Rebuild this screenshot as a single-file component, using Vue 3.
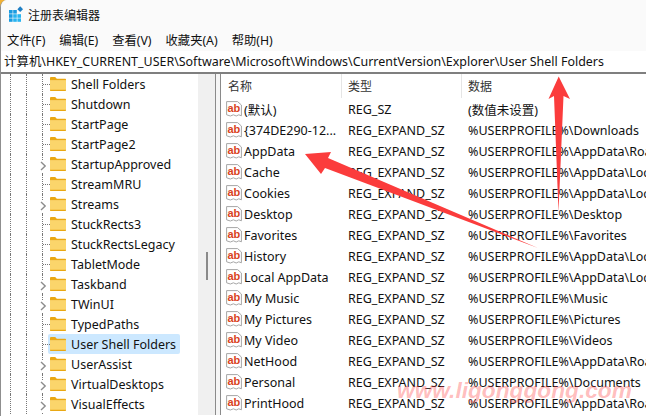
<script setup>
const tree = [
  ['Shell Folders', false], ['Shutdown', false], ['StartPage', false], ['StartPage2', false],
  ['StartupApproved', true], ['StreamMRU', false], ['Streams', true], ['StuckRects3', false],
  ['StuckRectsLegacy', false], ['TabletMode', false], ['Taskband', true], ['TWinUI', true],
  ['TypedPaths', false], ['User Shell Folders', false], ['UserAssist', true],
  ['VirtualDesktops', true], ['VisualEffects', true],
]
const E = 'REG_EXPAND_SZ'
const U = '%USERPROFILE%\\'
const rows = [
  ['(默认)', 'REG_SZ', '(数值未设置)'],
  ['{374DE290-12...', E, U + 'Downloads'],
  ['AppData', E, U + 'AppData\\Roaming'],
  ['Cache', E, U + 'AppData\\Local'],
  ['Cookies', E, U + 'AppData\\Local'],
  ['Desktop', E, U + 'Desktop'],
  ['Favorites', E, U + 'Favorites'],
  ['History', E, U + 'AppData\\Local'],
  ['Local AppData', E, U + 'AppData\\Local'],
  ['My Music', E, U + 'Music'],
  ['My Pictures', E, U + 'Pictures'],
  ['My Video', E, U + 'Videos'],
  ['NetHood', E, U + 'AppData\\Roaming'],
  ['Personal', E, U + 'Documents'],
  ['PrintHood', E, U + 'AppData\\Roaming'],
]
const menus = ['文件(F)', '编辑(E)', '查看(V)', '收藏夹(A)', '帮助(H)']
</script>

<template>
  <div class="window">
    <header class="title">
      <svg class="logo" width="16" height="16" viewBox="0 0 16 16">
        <g fill="#1a9be0">
          <rect x="1" y="4" width="3.6" height="3.6" /><rect x="5.2" y="4" width="3.6" height="3.6" />
          <rect x="1" y="8.2" width="3.6" height="3.6" /><rect x="5.2" y="8.2" width="3.6" height="3.6" fill="#27b4f0" />
          <rect x="9.4" y="8.2" width="3.6" height="3.6" fill="#27b4f0" />
          <rect x="1" y="12.4" width="3.6" height="3.4" /><rect x="5.2" y="12.4" width="3.6" height="3.4" fill="#27b4f0" />
          <rect x="9.4" y="12.4" width="3.6" height="3.4" fill="#27b4f0" />
        </g>
        <rect x="10.2" y="1.2" width="4" height="4" transform="rotate(45 12.2 3.2)" fill="#1f7fc4" />
      </svg>
      <span>注册表编辑器</span>
    </header>
    <nav class="menu">
      <span v-for="m in menus" :key="m">{{ m }}</span>
    </nav>
    <div class="address">计算机\HKEY_CURRENT_USER\Software\Microsoft\Windows\CurrentVersion\Explorer\User Shell Folders</div>

    <main class="panes">
      <section class="tree">
        <div class="tree-list">
          <div v-for="([name, more], i) in tree" :key="name" class="node">
            <i class="guide g1"></i><i class="guide g2"></i><i class="guide g3"></i>
            <svg v-if="more" class="chev" width="7" height="10" viewBox="0 0 7 10">
              <path d="M1 1l4.2 4L1 9" fill="none" stroke="#8c8c8c" stroke-width="1.4" />
            </svg>
            <i v-else class="dash"></i>
            <div class="item" :class="{ sel: name === 'User Shell Folders' }">
              <svg width="16" height="14" viewBox="0 0 16 14">
                <path d="M0 1.2C0 .5.5 0 1.2 0h4l1.6 1.8H15c.6 0 1 .4 1 1v1H0z" fill="#e9a814" />
                <path d="M0 3.2h16v9.6c0 .7-.5 1.2-1.2 1.2H1.2C.5 14 0 13.500 0 12.800z" fill="#fbd56b" />
                <path d="M0 12.700h16v.3c0 .6-.5 1-1.200 1H1.200C.5 14 0 13.600 0 13z" fill="#e9a814" />
              </svg>
              <span>{{ name }}</span>
            </div>
          </div>
        </div>
        <div class="scroll"><i class="thumb"></i></div>
      </section>

      <div class="split"></div>

      <section class="list">
        <div class="head">
          <div class="c1 hc">名称</div>
          <div class="c2 hc">类型</div>
          <div class="c3 hc">数据</div>
        </div>
        <div v-for="r in rows" :key="r[0]" class="row">
          <div class="c1 name">
            <svg class="ab" width="16" height="17" viewBox="0 0 16 17">
              <path d="M.6.6h11l3.800 3.400v10.800l-2.600-1-2.600 1.200-2.800-1.200-3 1.200-3.800-1.200z" fill="#fff" stroke="#a6a6a6" stroke-width="1" />
              <text x="1.400" y="10.800" class="abt">ab</text>
            </svg>
            <span>{{ r[0] }}</span>
          </div>
          <div class="c2">{{ r[1] }}</div>
          <div class="c3">{{ r[2] }}</div>
        </div>
      </section>
    </main>

    <svg class="arrows" width="646" height="416" viewBox="0 0 646 416">
      <polygon points="558.700,76.500 570,99 563.500,96 558.500,212 554,96 548.500,99" fill="#fb3c3c" />
      <polygon points="305,154 331,152 328,158 538,248 325,168 321,174" fill="#fb3c3c" />
    </svg>
    <div class="mark">www.ligonggong.com</div>
  </div>
</template>

<style scoped>
.window {
  position: relative;
  width: 646px;
  height: 416px;
  overflow: hidden;
  background: #fff;
  border-top-left-radius: 7px;
  font-family: "Noto Sans", "Noto Sans CJK SC", sans-serif;
  font-size: 12px;
  color: #111;
  box-sizing: border-box;
  border-left: 1px solid #8f8f8f;
}
.title {
  height: 29px;
  display: flex;
  align-items: center;
  gap: 4px;
  padding-left: 7px;
  background: #fafafa;
  font-family: "Noto Sans CJK SC", sans-serif;
  font-size: 12px;
}
.logo { margin-top: -1px; }
.menu {
  height: 22px;
  display: flex;
  align-items: center;
  gap: 14px;
  padding-left: 6px;
  background: #fafafa;
  font-size: 12.300px;
}
.address {
  height: 21px;
  line-height: 21px;
  padding-left: 3px;
  background: #fff;
  border-bottom: 2px solid #7f7f7f;
  white-space: nowrap;
  font-size: 12.450px;
}
.panes {
  display: flex;
  height: 341px;
}
.tree {
  width: 214px;
  display: flex;
  flex: none;
}
.tree-list {
  width: 197px;
  flex: none;
}
.node {
  position: relative;
  height: 20px;
  display: flex;
  align-items: center;
  padding-left: 47px;
}
.guide {
  position: absolute;
  top: 0;
  bottom: 0;
  border-left: 1px dotted #777;
}
.g1 { left: 9px; }
.g2 { left: 25px; }
.g3 { left: 41px; }
.chev {
  position: absolute;
  left: 38px;
  top: 6px;
  background: #fff;
  padding: 1px 1px;
  box-sizing: content-box;
}
.dash {
  position: absolute;
  left: 42px;
  top: 10px;
  width: 7px;
  border-top: 1px dotted #777;
}
.item {
  display: flex;
  align-items: center;
  gap: 5px;
  width: 132px;
  height: 20px;
  padding-left: 2px;
  box-sizing: border-box;
  border-radius: 2px;
  white-space: nowrap;
  font-size: 12.500px;
}
.item.sel { background: #cce8ff; }
.item svg { flex: none; }
.scroll {
  width: 17px;
  flex: none;
  background: #f0f0f0;
  display: flex;
  justify-content: center;
  padding-top: 178px;
  box-sizing: border-box;
}
.thumb {
  width: 2px;
  height: 28px;
  background: #8a8a8a;
}
.split {
  width: 6px;
  flex: none;
  box-sizing: border-box;
  border-left: 1px solid #8a8a8a;
  border-right: 1px solid #8a8a8a;
  background: #f5f5f5;
}
.list {
  flex: 1;
  min-width: 0;
  overflow: hidden;
}
.head {
  height: 25px;
  display: flex;
  align-items: flex-start;
}
.hc {
  height: 24px;
  line-height: 24px;
  border-right: 1px solid #e5e5e5;
  box-sizing: border-box;
  color: #333;
  font-family: "Noto Sans CJK SC", sans-serif;
}
.c1 { width: 120px; flex: none; }
.c2 { width: 120px; flex: none; box-sizing: border-box; }
.c3 { flex: none; width: 190px; box-sizing: border-box; white-space: nowrap; }
.head .c1 { width: 121px; padding-left: 7px; }
.head .c2 { padding-left: 6px; }
.head .c3 { border-right: 0; padding-left: 6px; }
.row {
  height: 21px;
  display: flex;
  align-items: center;
  font-size: 12.500px;
  white-space: nowrap;
}
.row .c1 { width: 120px; }
.row .c2 { padding-left: 7px; }
.row .c3 { padding-left: 7px; }
.name {
  display: flex;
  align-items: center;
  gap: 2px;
  padding-left: 5px;
  box-sizing: border-box;
}
.ab { flex: none; }
.abt {
  font-family: "Liberation Sans", sans-serif;
  font-weight: 700;
  font-size: 11px;
  fill: #d9431e;
}
.arrows {
  position: absolute;
  left: -1px;
  top: 0;
  pointer-events: none;
}
.mark {
  position: absolute;
  left: 396px;
  top: 377px;
  font-family: "Liberation Sans", sans-serif;
  font-weight: 700;
  font-style: italic;
  font-size: 22.700px;
  color: rgba(255, 70, 70, 0.36);
  white-space: nowrap;
}
</style>

<style>
html, body { background: #f2b134; margin: 0; }
</style>
